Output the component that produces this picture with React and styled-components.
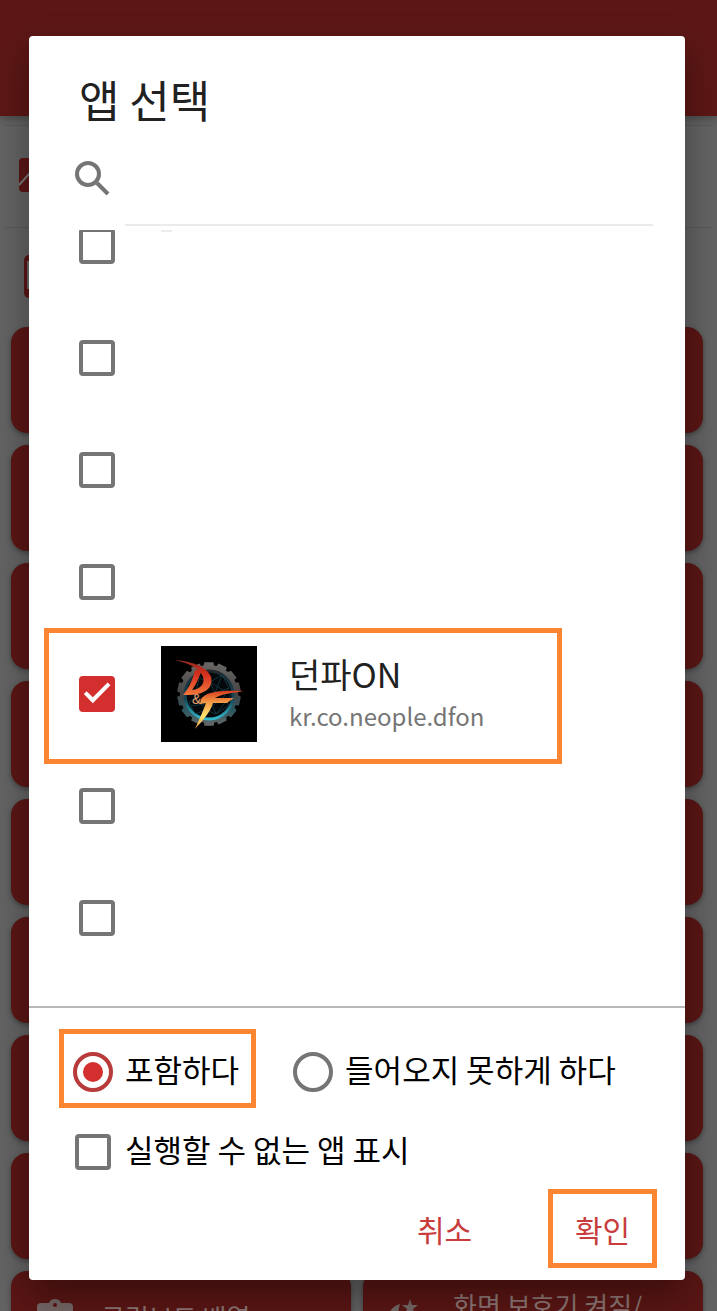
import React, { useLayoutEffect, useRef } from "react";
import styled, { createGlobalStyle } from "styled-components";

const GlobalStyle = createGlobalStyle`
  *, *::before, *::after { box-sizing: border-box; }
  body { margin: 0; font-family: "Noto Sans CJK KR", "Noto Sans", sans-serif; }
  button, input { font: inherit; }
`;

const accent = "#d32f2f";
const grey = "#757575";
const highlight = "#fb8530";

const Screen = styled.div`
  position: relative;
  height: 100vh;
  overflow: hidden;
`;

const Behind = styled.div`
  position: absolute;
  inset: 0;
  overflow: hidden;
  background: #636363;
`;

const AppBar = styled.div`
  height: 116px;
  background: #5c1715;
  box-shadow: 0 2px 8px rgba(0, 0, 0, 0.3);
`;

const Settings = styled.div`
  padding-top: 9px;
`;

const Setting = styled.div`
  display: flex;
  align-items: center;
  height: 102px;
  margin: 0 4px;
  padding: 0 0 4px 15px;
  border-top: 1px solid #595959;
`;

const CardGrid = styled.div`
  display: grid;
  grid-template-columns: 1fr 1fr;
  grid-auto-rows: 106px;
  gap: 12px;
  padding: 0 14px 0 11px;
  margin-top: -2px;
`;

const Card = styled.div`
  display: flex;
  gap: 26px;
  padding: 18px 16px 18px 24px;
  border-radius: 16px;
  background: #5a1614;
  color: #8d7675;
  font-size: 26px;
  line-height: 32px;
  box-shadow: 0 2px 5px rgba(0, 0, 0, 0.35);
  svg { flex: none; margin-top: 10px; }
`;

const CardLabel = styled.span`
  padding-top: ${(p) => (p.$oneLine ? 12 : 0)}px;
`;

const Overlay = styled.div`
  position: relative;
  height: 100%;
  padding: 36px 32px 31px 29px;
`;

const Dialog = styled.form`
  display: flex;
  flex-direction: column;
  height: 100%;
  margin: 0;
  border-radius: 4px;
  background: #fff;
  box-shadow: 0 16px 36px rgba(0, 0, 0, 0.35);
`;

const Title = styled.h1`
  margin: 0;
  padding: 33px 50px 3px;
  color: #212121;
  font-size: 44px;
  font-weight: 400;
  line-height: 60px;
`;

const Search = styled.label`
  display: flex;
  align-items: center;
  gap: 14px;
  height: 94px;
  padding: 0 32px 0 46px;
  svg { flex: none; }
`;

const SearchInput = styled.input`
  flex: 1;
  min-width: 0;
  align-self: stretch;
  padding: 0;
  border: 0;
  border-bottom: 2px solid #ebebeb;
  border-radius: 0;
  outline: 0;
  background: transparent;
  font-size: 30px;
`;

const AppList = styled.div`
  flex: 1;
  min-height: 0;
  margin-top: 4px;
  overflow-y: auto;
  scrollbar-width: none;
  border-bottom: 2px solid #b9b9b9;
`;

const AppRow = styled.label`
  position: relative;
  display: flex;
  align-items: center;
  height: 112px;
  padding-left: 50px;
`;

const Marker = styled.span`
  position: absolute;
  left: 15px;
  top: -10px;
  bottom: -14px;
  width: 518px;
  max-width: calc(100% - 30px);
  border: 5px solid ${highlight};
  pointer-events: none;
`;

const Check = styled.input`
  appearance: none;
  flex: none;
  display: grid;
  place-content: center;
  width: 36px;
  height: 36px;
  margin: 0;
  border: 4px solid ${grey};
  border-radius: 4px;
  background: #fff;
  &:checked {
    border-color: ${accent};
    background: ${accent};
  }
  &:checked::before {
    content: "";
    width: 28px;
    height: 28px;
    background: #fff;
    clip-path: polygon(3% 50%, 13% 40%, 35% 62%, 88% 9%, 98% 19%, 35% 83%);
  }
`;

const Radio = styled.input`
  appearance: none;
  flex: none;
  display: grid;
  place-content: center;
  width: 40px;
  height: 40px;
  margin: 0;
  border: 4px solid ${grey};
  border-radius: 50%;
  &:checked { border-color: #b93a3a; }
  &:checked::before {
    content: "";
    width: 20px;
    height: 20px;
    border-radius: 50%;
    background: ${accent};
  }
`;

const Sliver = styled.span`
  align-self: flex-start;
  width: 11px;
  height: 2px;
  margin: 40px 0 0 46px;
  background: #ececec;
`;

const AppIcon = styled.svg`
  flex: none;
  width: 96px;
  height: 96px;
  margin: 0 32px 0 46px;
`;

const AppText = styled.span`
  display: flex;
  flex-direction: column;
`;

const AppName = styled.span`
  color: #212121;
  font-size: 34px;
  line-height: 44px;
`;

const PackageName = styled.span`
  color: ${grey};
  font-size: 24px;
  line-height: 40px;
`;

const Footer = styled.div`
  padding: 21px 28px 12px 30px;
  color: #000;
  font-size: 31px;
  line-height: 40px;
`;

const Modes = styled.div`
  display: flex;
  gap: 23px;
`;

const Mode = styled.label`
  display: flex;
  align-items: center;
  gap: 12px;
  height: 79px;
  padding: 6px 12px 0 9px;
  border: 5px solid ${(p) => (p.$marked ? highlight : "transparent")};
  white-space: nowrap;
`;

const ShowHidden = styled.label`
  display: flex;
  align-items: center;
  gap: 14px;
  height: 81px;
  padding: 6px 16px 0;
`;

const ChoiceText = styled.span`
  padding-bottom: 6px;
`;

const Actions = styled.div`
  display: flex;
  justify-content: flex-end;
  gap: 49px;
`;

const Action = styled.button`
  width: 109px;
  height: 79px;
  padding: 0;
  border: 5px solid ${(p) => (p.$marked ? highlight : "transparent")};
  background: transparent;
  color: #c83c3c;
  font-size: 30px;
`;

const SearchIcon = () => (
  <svg width="36" height="36" viewBox="0 0 36 36" fill="none" stroke={grey} aria-hidden="true">
    <circle cx="13" cy="13" r="11" strokeWidth="4" />
    <path d="M22 22L33 33" strokeWidth="4" />
  </svg>
);

const teeth = Array.from({ length: 14 }, (_, i) => (i * 360) / 14);

const GameIcon = () => (
  <AppIcon viewBox="0 0 96 96" role="img" aria-label="D&F">
    <defs>
      <linearGradient id="metal" gradientUnits="userSpaceOnUse" x1="0" y1="16" x2="0" y2="80">
        <stop offset="0" stopColor="#6b6966" />
        <stop offset="0.5" stopColor="#454343" />
        <stop offset="0.75" stopColor="#2c5660" />
        <stop offset="1" stopColor="#686868" />
      </linearGradient>
      <linearGradient id="rim" x1="0" y1="0" x2="0" y2="1">
        <stop offset="0" stopColor="#20282d" />
        <stop offset="0.6" stopColor="#12495b" />
        <stop offset="1" stopColor="#35b9cd" />
      </linearGradient>
      <linearGradient id="flameD" x1="0" y1="0" x2="0" y2="1">
        <stop offset="0" stopColor="#8e2b1c" />
        <stop offset="0.4" stopColor="#d52e1e" />
        <stop offset="1" stopColor="#f2793c" />
      </linearGradient>
      <linearGradient id="flameF" x1="0" y1="0" x2="0" y2="1">
        <stop offset="0" stopColor="#d83c20" />
        <stop offset="0.3" stopColor="#f49a45" />
        <stop offset="0.65" stopColor="#ffe16e" />
        <stop offset="1" stopColor="#ef9a43" />
      </linearGradient>
    </defs>
    <rect width="96" height="96" fill="#000" />
    <path
      fill="url(#metal)"
      d={teeth
        .map((deg, i) => {
          const at = (offset, r) => {
            const a = ((deg + offset) * Math.PI) / 180;
            return `${(48 + r * Math.sin(a)).toFixed(1)} ${(48 - r * Math.cos(a)).toFixed(1)}`;
          };
          return `${i ? "L" : "M"}${at(-8, 32)}L${at(8, 32)}L${at(10, 29)}L${at(15, 29)}`;
        })
        .join("") + "Z"}
    />
    <circle cx="48" cy="49" r="24" fill="#05090b" stroke="url(#rim)" strokeWidth="3" />
    <g fill="none" stroke="#165262" strokeWidth="0.7" opacity="0.8">
      <path d="M29 40L38 32L49 36L61 29L68 42L62 52L68 59L55 68L45 64L34 68L28 56L38 50Z" />
      <path d="M38 32L34 51L45 64L54 47L49 36L70 49L55 68L50 57L30 60M61 29L54 47L68 42M34 51L29 40M62 52L45 64" />
    </g>
    <path fill="url(#flameD)" d="M14 14C29 15 46 20 50 31C53 43 42 50 22 49C28 42 32 33 34 24L41 22C39 31 34 40 31 44C40 43 44 37 42 31C39 22 29 18 14 14Z" />
    <path fill="url(#flameF)" d="M40 53C45 46 57 44 83 45C71 47 60 48 54 52L73 52L66 57L52 57C49 67 41 75 34 83C38 74 42 65 45 57L39 58Z" />
    <text x="31" y="58" fill="#e8a06d" fontSize="14" fontFamily="Liberation Sans, sans-serif">&amp;</text>
  </AppIcon>
);

const PictureIcon = () => (
  <svg width="34" height="34" viewBox="0 0 34 34" aria-hidden="true">
    <rect width="34" height="34" rx="4" fill="#5a1615" />
    <path d="M0 27L10 16L17 24L24 13L34 28" fill="none" stroke="#777" strokeWidth="2" />
  </svg>
);

const PhoneIcon = () => (
  <svg width="40" height="44" viewBox="0 0 40 44" aria-hidden="true">
    <rect x="5" width="30" height="43" rx="5" fill="#5a1615" />
    <rect x="8" y="6" width="24" height="28" fill="#686868" />
  </svg>
);

const ClipboardIcon = () => (
  <svg width="40" height="40" viewBox="0 0 40 40" aria-hidden="true">
    <path fill="#756766" fillRule="evenodd" d="M6 4H14C15 1 17 0 20 0S25 1 26 4H34Q38 4 38 8V40H2V8Q2 4 6 4ZM20 4A2 2 0 1 0 20 8A2 2 0 1 0 20 4Z" />
  </svg>
);

const StarMoonIcon = () => (
  <svg width="40" height="40" viewBox="0 0 40 40" aria-hidden="true">
    <path fill="#756766" d="M23 0L25 6L31 6L26 10L28 16L23 12L18 16L20 10L15 6L21 6ZM13 5C7 6 3 11 1 17C1 29 8 36 18 38C12 30 9 18 13 5Z" />
  </svg>
);

const rowsAbove = ["app-1", "app-2", "app-3", "app-4"];
const rowsBelow = ["app-6", "app-7", "app-8"];
const blankCards = Array.from({ length: 16 }, (_, i) => i);

export default function App() {
  const list = useRef(null);

  useLayoutEffect(() => {
    list.current.scrollTop = 40;
  }, []);

  return (
    <Screen>
      <GlobalStyle />
      <Behind aria-hidden="true">
        <AppBar />
        <Settings>
          <Setting><PictureIcon /></Setting>
          <Setting><PhoneIcon /></Setting>
        </Settings>
        <CardGrid>
          {blankCards.map((i) => <Card key={i} />)}
          <Card>
            <ClipboardIcon />
            <CardLabel $oneLine>클립보드 배열</CardLabel>
          </Card>
          <Card>
            <StarMoonIcon />
            <CardLabel>화면 보호기 켜짐/</CardLabel>
          </Card>
        </CardGrid>
      </Behind>
      <Overlay>
        <Dialog role="dialog" aria-labelledby="dialog-title" onSubmit={(e) => e.preventDefault()}>
          <Title id="dialog-title">앱 선택</Title>
          <Search>
            <SearchIcon />
            <SearchInput type="text" aria-label="검색" />
          </Search>
          <AppList ref={list}>
            {rowsAbove.map((name, i) => (
              <AppRow key={name}>
                <Check type="checkbox" name={name} aria-label={name} />
                {i === 0 && <Sliver />}
              </AppRow>
            ))}
            <AppRow>
              <Check type="checkbox" name="dfon" defaultChecked />
              <GameIcon />
              <AppText>
                <AppName>던파ON</AppName>
                <PackageName>kr.co.neople.dfon</PackageName>
              </AppText>
              <Marker />
            </AppRow>
            {rowsBelow.map((name) => (
              <AppRow key={name}>
                <Check type="checkbox" name={name} aria-label={name} />
              </AppRow>
            ))}
          </AppList>
          <Footer>
            <Modes>
              <Mode $marked>
                <Radio type="radio" name="mode" defaultChecked />
                <ChoiceText>포함하다</ChoiceText>
              </Mode>
              <Mode>
                <Radio type="radio" name="mode" />
                <ChoiceText>들어오지 못하게 하다</ChoiceText>
              </Mode>
            </Modes>
            <ShowHidden>
              <Check type="checkbox" name="hidden" />
              <ChoiceText>실행할 수 없는 앱 표시</ChoiceText>
            </ShowHidden>
            <Actions>
              <Action type="button">취소</Action>
              <Action type="submit" $marked>확인</Action>
            </Actions>
          </Footer>
        </Dialog>
      </Overlay>
    </Screen>
  );
}
